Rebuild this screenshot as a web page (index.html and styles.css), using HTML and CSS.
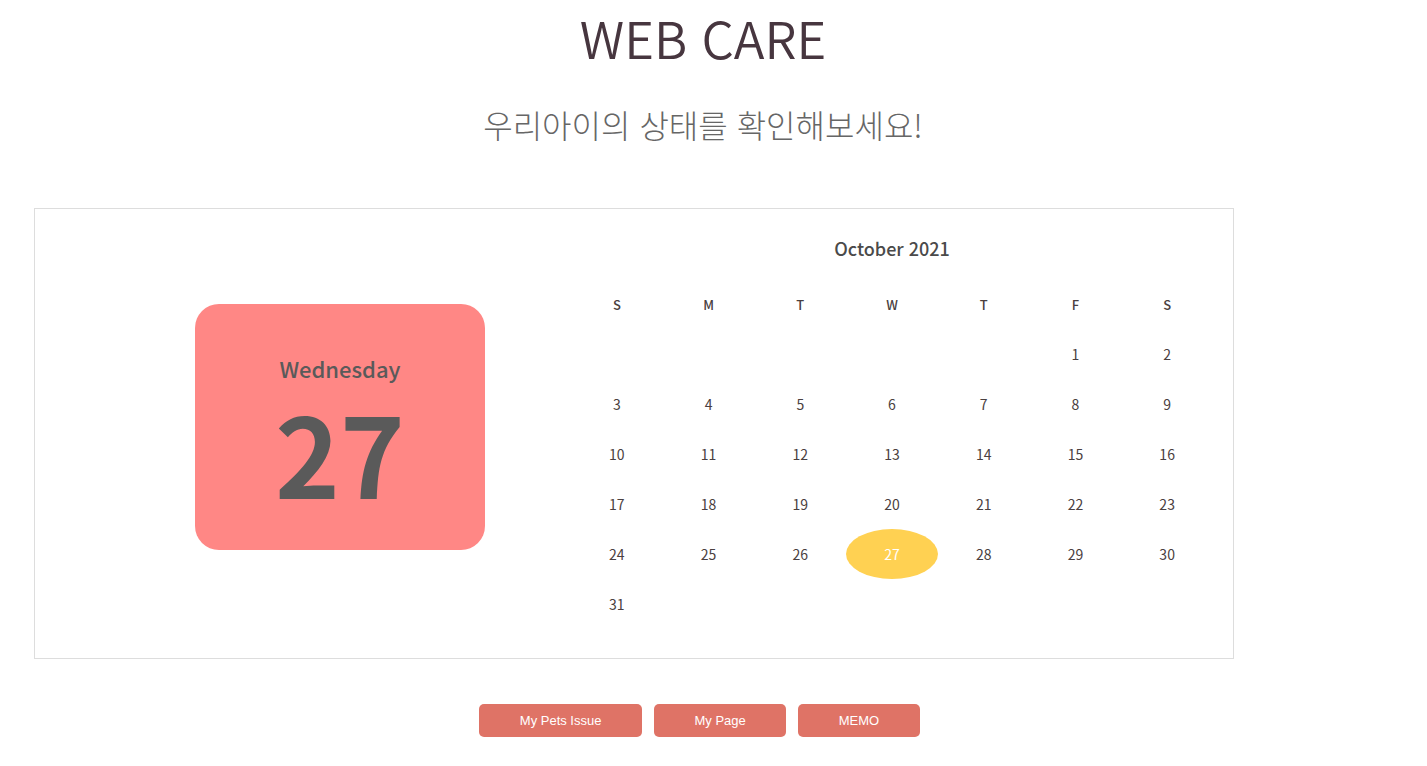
FILE: index.html
```html
<!DOCTYPE html>
<html lang="ko">
<head>
<meta charset="utf-8">
<title>WEB CARE</title>
<link rel="stylesheet" href="styles.css">
</head>
<body>
<div class="page">
  <header class="head">
    <h1 class="title">WEB CARE</h1>
    <p class="subtitle">우리아이의 상태를 확인해보세요!</p>
  </header>

  <section class="board">
    <div class="today">
      <div class="today-day">Wednesday</div>
      <div class="today-num">27</div>
    </div>

    <div class="cal">
      <div class="cal-title">October 2021</div>
      <div class="cal-grid">
        <div class="wd">S</div><div class="wd">M</div><div class="wd">T</div><div class="wd">W</div><div class="wd">T</div><div class="wd">F</div><div class="wd">S</div>
        <div class="d"></div><div class="d"></div><div class="d"></div><div class="d"></div><div class="d"></div><div class="d">1</div><div class="d">2</div>
        <div class="d">3</div><div class="d">4</div><div class="d">5</div><div class="d">6</div><div class="d">7</div><div class="d">8</div><div class="d">9</div>
        <div class="d">10</div><div class="d">11</div><div class="d">12</div><div class="d">13</div><div class="d">14</div><div class="d">15</div><div class="d">16</div>
        <div class="d">17</div><div class="d">18</div><div class="d">19</div><div class="d">20</div><div class="d">21</div><div class="d">22</div><div class="d">23</div>
        <div class="d">24</div><div class="d">25</div><div class="d">26</div><div class="d sel">27</div><div class="d">28</div><div class="d">29</div><div class="d">30</div>
        <div class="d">31</div>
      </div>
    </div>
  </section>

  <nav class="actions">
    <button class="btn">My Pets Issue</button>
    <button class="btn">My Page</button>
    <button class="btn">MEMO</button>
  </nav>
</div>
</body>
</html>
```

FILE: styles.css
```css
html, body {
  margin: 0;
  padding: 0;
  background: #fff;
}
body {
  font-family: "Noto Sans CJK KR", "Noto Sans", sans-serif;
  color: #444;
}
.page {
  width: 1406px;
}
.head {
  text-align: center;
}
.title {
  margin: 0;
  padding-top: 0;
  font-size: 51px;
  font-weight: 350;
  line-height: 74px;
  color: #47363f;
}
.subtitle {
  margin: 28px 0 0;
  font-size: 32px;
  font-weight: 300;
  line-height: 44px;
  color: #666;
}
.board {
  margin: 62px 0 0 34px;
  width: 1198px;
  height: 449px;
  border: 1px solid #ddd;
  display: flex;
  align-items: flex-start;
}
.today {
  margin: 95px 0 0 160px;
  width: 290px;
  height: 246px;
  background: #ff8785;
  border-radius: 24px;
  display: flex;
  flex-direction: column;
  align-items: center;
  color: #5a5a5a;
}
.today-day {
  margin-top: 51px;
  font-size: 22px;
  font-weight: 500;
  line-height: 26px;
}
.today-num {
  margin-top: 25px;
  font-size: 110px;
  font-weight: 700;
  line-height: 90px;
}
.cal {
  margin: 27px 0 0 86px;
  width: 642px;
}
.cal-title {
  text-align: center;
  font-size: 18px;
  font-weight: 500;
  line-height: 24px;
  color: #4a4a4a;
}
.cal-grid {
  margin-top: 19px;
  display: grid;
  grid-template-columns: repeat(7, 1fr);
  grid-auto-rows: 50px;
}
.wd, .d {
  display: flex;
  align-items: center;
  justify-content: center;
  font-size: 14px;
  color: #4a4040;
}
.wd {
  font-size: 13px;
  font-weight: 500;
}
.sel {
  background: #ffd152;
  border-radius: 50%;
  color: #fff;
}
.actions {
  margin-top: 45px;
  display: flex;
  justify-content: center;
  gap: 12px;
  padding-right: 7px;
}
.btn {
  height: 33px;
  padding: 0 40.5px;
  border: none;
  border-radius: 5px;
  background: #df7366;
  color: #fff;
  font-family: "Liberation Sans", Arial, sans-serif;
  font-size: 13px;
}
```
